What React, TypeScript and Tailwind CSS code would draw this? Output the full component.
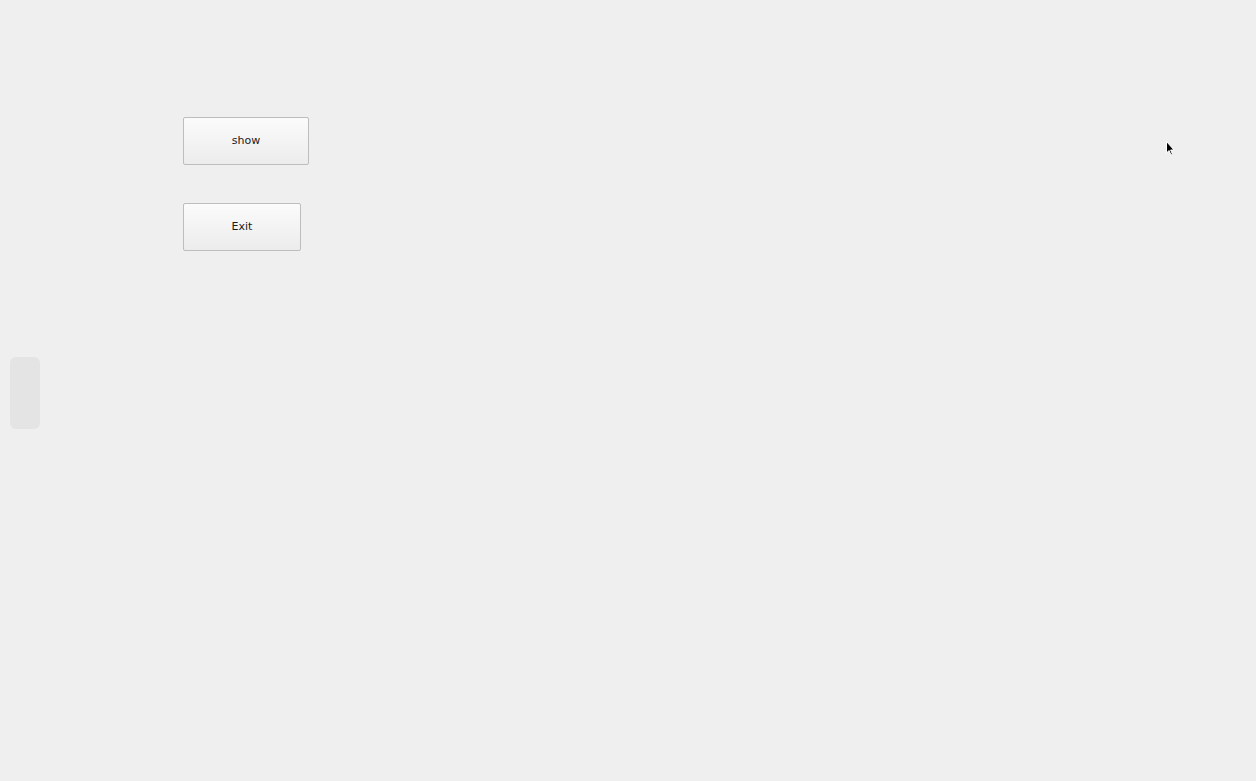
import React from "react";

export default function App() {
  return (
    <div className="relative w-[1256px] h-[781px] bg-[#efefef] overflow-hidden font-['DejaVu_Sans',sans-serif]">
      <div className="flex flex-col items-start gap-[38px] pt-[117px] pl-[183px]">
        <button className="w-[126px] h-[48px] rounded-[2px] border border-[#bdbdbd] bg-gradient-to-b from-[#fbfbfb] to-[#ececec] text-[11px] text-[#1a1a1a] flex items-center justify-center">
          show
        </button>
        <button className="w-[118px] h-[48px] rounded-[2px] border border-[#bdbdbd] bg-gradient-to-b from-[#fbfbfb] to-[#ececec] text-[11px] text-[#1a1a1a] flex items-center justify-center">
          Exit
        </button>
      </div>
      <div className="absolute left-[10px] top-[357px] w-[30px] h-[72px] rounded-[6px] bg-[#e4e4e4]" />
      <svg className="absolute left-[1166px] top-[141px]" width="10" height="16" viewBox="0 0 10 16">
        <path d="M0.5 0.5 L0.5 12 L3 9.5 L5 14 L6.5 13.3 L4.6 9 L8 9 Z" fill="#000" stroke="#fff" strokeWidth="1" />
      </svg>
    </div>
  );
}
